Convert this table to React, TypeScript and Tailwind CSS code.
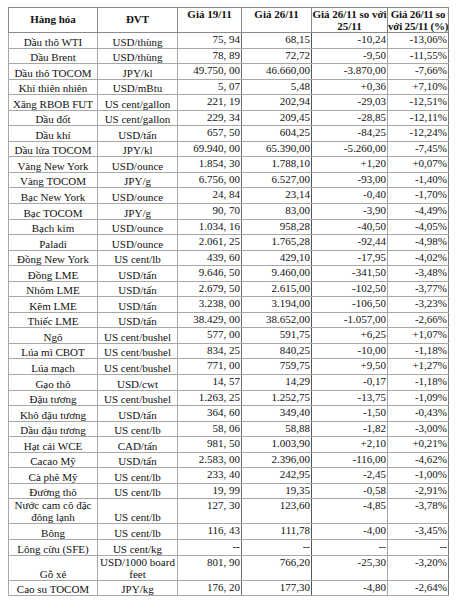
const rows: [string, string, string, string, string, string][] = [
  ["Dầu thô WTI", "USD/thùng", "75, 94", "68,15", "-10,24", "-13,06%"],
  ["Dầu Brent", "USD/thùng", "78, 89", "72,72", "-9,50", "-11,55%"],
  ["Dầu thô TOCOM", "JPY/kl", "49.750, 00", "46.660,00", "-3.870,00", "-7,66%"],
  ["Khí thiên nhiên", "USD/mBtu", "5, 07", "5,48", "+0,36", "+7,10%"],
  ["Xăng RBOB FUT", "US cent/gallon", "221, 19", "202,94", "-29,03", "-12,51%"],
  ["Dầu đốt", "US cent/gallon", "229, 34", "209,45", "-28,85", "-12,11%"],
  ["Dầu khí", "USD/tấn", "657, 50", "604,25", "-84,25", "-12,24%"],
  ["Dầu lửa TOCOM", "JPY/kl", "69.940, 00", "65.390,00", "-5.260,00", "-7,45%"],
  ["Vàng New York", "USD/ounce", "1.854, 30", "1.788,10", "+1,20", "+0,07%"],
  ["Vàng TOCOM", "JPY/g", "6.756, 00", "6.527,00", "-93,00", "-1,40%"],
  ["Bạc New York", "USD/ounce", "24, 84", "23,14", "-0,40", "-1,70%"],
  ["Bạc TOCOM", "JPY/g", "90, 70", "83,00", "-3,90", "-4,49%"],
  ["Bạch kim", "USD/ounce", "1.034, 16", "958,28", "-40,50", "-4,05%"],
  ["Paladi", "USD/ounce", "2.061, 25", "1.765,28", "-92,44", "-4,98%"],
  ["Đồng New York", "US cent/lb", "439, 60", "429,10", "-17,95", "-4,02%"],
  ["Đồng LME", "USD/tấn", "9.646, 50", "9.460,00", "-341,50", "-3,48%"],
  ["Nhôm LME", "USD/tấn", "2.679, 50", "2.615,00", "-102,50", "-3,77%"],
  ["Kẽm LME", "USD/tấn", "3.238, 00", "3.194,00", "-106,50", "-3,23%"],
  ["Thiếc LME", "USD/tấn", "38.429, 00", "38.652,00", "-1.057,00", "-2,66%"],
  ["Ngô", "US cent/bushel", "577, 00", "591,75", "+6,25", "+1,07%"],
  ["Lúa mì CBOT", "US cent/bushel", "834, 25", "840,25", "-10,00", "-1,18%"],
  ["Lúa mạch", "US cent/bushel", "771, 00", "759,75", "+9,50", "+1,27%"],
  ["Gạo thô", "USD/cwt", "14, 57", "14,29", "-0,17", "-1,18%"],
  ["Đậu tương", "US cent/bushel", "1.263, 25", "1.252,75", "-13,75", "-1,09%"],
  ["Khô đậu tương", "USD/tấn", "364, 60", "349,40", "-1,50", "-0,43%"],
  ["Dầu đậu tương", "US cent/lb", "58, 06", "58,88", "-1,82", "-3,00%"],
  ["Hạt cải WCE", "CAD/tấn", "981, 50", "1.003,90", "+2,10", "+0,21%"],
  ["Cacao Mỹ", "USD/tấn", "2.583, 00", "2.396,00", "-116,00", "-4,62%"],
  ["Cà phê Mỹ", "US cent/lb", "233, 40", "242,95", "-2,45", "-1,00%"],
  ["Đường thô", "US cent/lb", "19, 99", "19,35", "-0,58", "-2,91%"],
  ["Nước cam cô đặc đông lạnh", "US cent/lb", "127, 30", "123,60", "-4,85", "-3,78%"],
  ["Bông", "US cent/lb", "116, 43", "111,78", "-4,00", "-3,45%"],
  ["Lông cừu (SFE)", "US cent/kg", "--", "--", "--", "--"],
  ["Gỗ xẻ", "USD/1000 board feet", "801, 90", "766,20", "-25,30", "-3,20%"],
  ["Cao su TOCOM", "JPY/kg", "176, 20", "177,30", "-4,80", "-2,64%"],
];

const tall = new Set(["Nước cam cô đặc đông lạnh", "Gỗ xẻ"]);

export default function App() {
  return (
    <div className="min-h-screen bg-white pt-[7px] pl-[8px] font-['Liberation_Serif',serif] text-[11px] text-[#111]">
      <table className="w-[440px] table-fixed border-collapse border border-[#8a8a8a]">
        <colgroup>
          <col className="w-[89px]" />
          <col className="w-[80px]" />
          <col className="w-[64px]" />
          <col className="w-[70px]" />
          <col className="w-[76px]" />
          <col className="w-[61px]" />
        </colgroup>
        <thead>
          <tr className="h-[25px] font-bold leading-[11.5px] whitespace-nowrap">
            <th className="border border-[#8a8a8a] align-middle text-center">Hàng hóa</th>
            <th className="border border-[#8a8a8a] align-middle text-center">ĐVT</th>
            <th className="border border-[#8a8a8a] align-top pt-[1px] text-center">Giá 19/11</th>
            <th className="border border-[#8a8a8a] align-top pt-[1px] text-center">Giá 26/11</th>
            <th className="border border-[#8a8a8a] align-top pt-[1px] text-center">
              Giá 26/11 so với
              <br />
              25/11
            </th>
            <th className="border border-[#8a8a8a] align-top pt-[1px] text-center tracking-[-0.2px]">
              Giá 26/11 so
              <br />
              với 25/11 (%)
            </th>
          </tr>
        </thead>
        <tbody>
          {rows.map((r) => (
            <tr key={r[0]} className={tall.has(r[0]) ? "h-[24.5px] leading-[12px]" : "h-[15.55px] leading-[12px]"}>
              <td className="border border-[#a8a8a8] align-bottom text-center px-[2px]">{r[0]}</td>
              <td className="border border-[#a8a8a8] align-bottom text-center px-[2px]">{r[1]}</td>
              <td className="border border-[#a8a8a8] border-r-[#6a6a6a] align-top text-right pr-[1px]">{r[2]}</td>
              <td className="border border-[#a8a8a8] border-r-[#555] align-top text-right pr-[1px]">{r[3]}</td>
              <td className="border border-[#a8a8a8] align-top text-right pr-[1px]">{r[4]}</td>
              <td className="border border-[#a8a8a8] border-r-[#777] align-top text-right pr-[1px]">{r[5]}</td>
            </tr>
          ))}
        </tbody>
      </table>
    </div>
  );
}
